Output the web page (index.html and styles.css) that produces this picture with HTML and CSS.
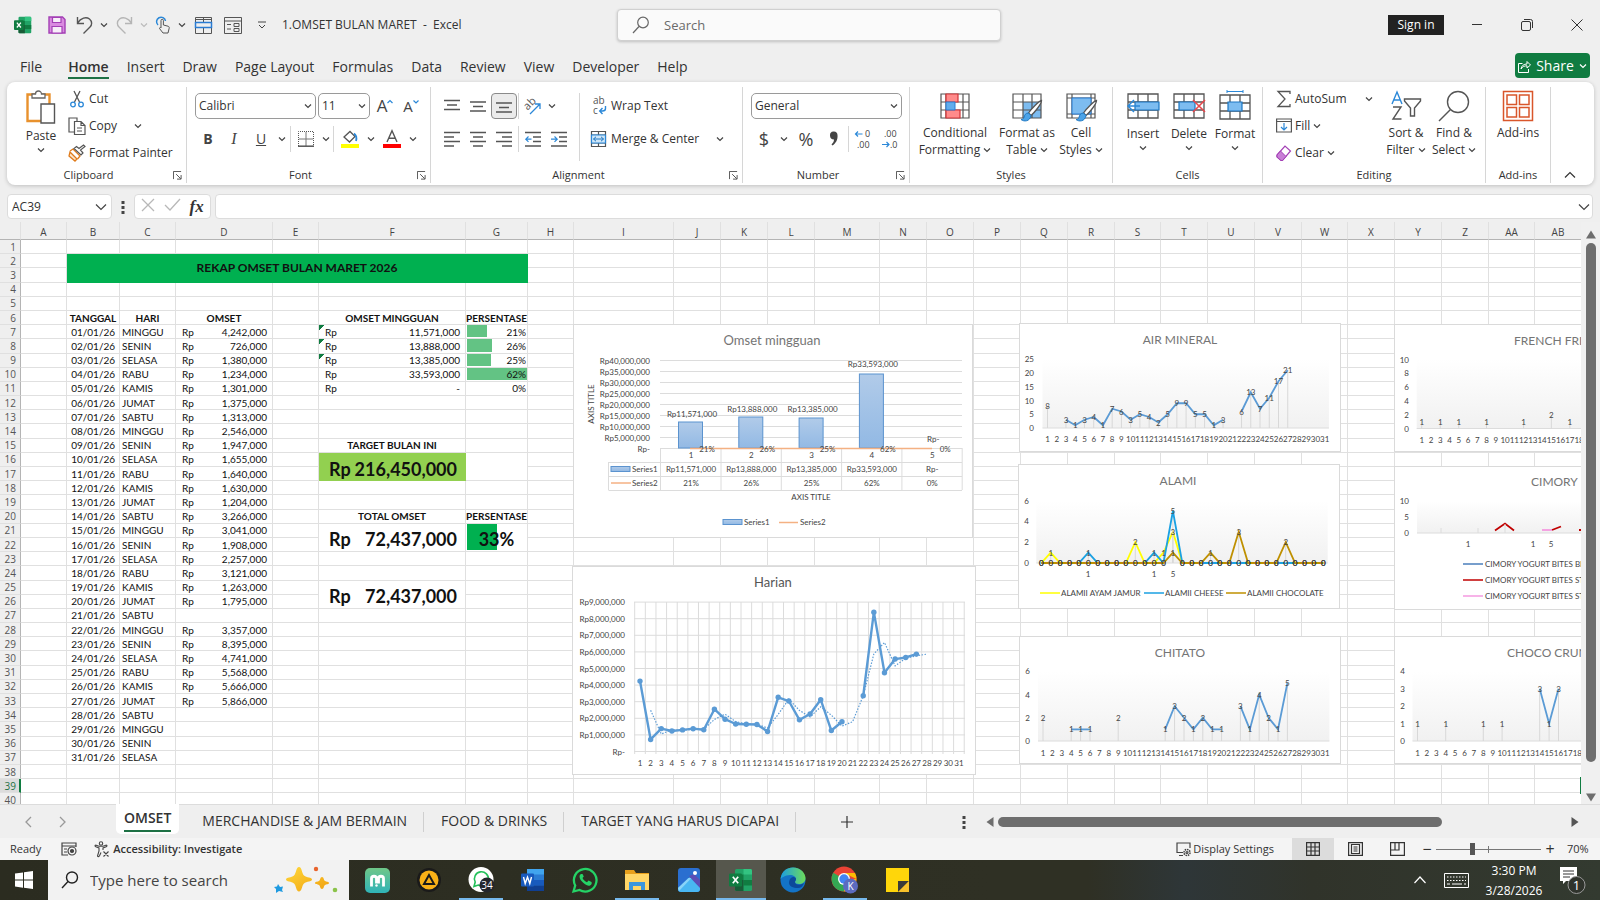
FILE: index.html
```html
<!DOCTYPE html>
<html lang="en">
<head>
<meta charset="utf-8">
<title>1.OMSET BULAN MARET - Excel</title>
<link rel="stylesheet" href="styles.css">
</head>
<body>
<svg class="defs" aria-hidden="true">
  <symbol id="chev" viewBox="0 0 8 8"><path d="M1 2.5 4 5.5 7 2.5" fill="none" stroke="currentColor" stroke-width="1.2"/></symbol>
  <symbol id="launch" viewBox="0 0 10 10"><path d="M.5 9V.5H9M3.5 3.5l5 5M9 4.5V9H4.5" fill="none" stroke="#444"/></symbol>
  <symbol id="grid" viewBox="0 0 32 26"><path d="M1 1h30v24H1zM1 9h30M1 17h30M11 1v24M21 1v24" fill="#fff" stroke="#555" stroke-width="1.3"/></symbol>
  <symbol id="brush" viewBox="0 0 24 24"><path d="M22.500 1.500C20 2 12 10 9.500 14l2.500 2.500C16 13 22.500 5 22.500 1.500z" fill="#fff" stroke="#555" stroke-width="1.3"/><path d="M9.500 14c-3 0-4 2-4.500 4.500-.4 1.500-2 2-3 2 3 2.500 9 2 10-4z" fill="#4ba3e8" stroke="#1c77c3"/></symbol>
  <symbol id="xl" viewBox="0 0 24 24"><rect x="6" y="1" width="17" height="22" rx="1.500" fill="#21a366"/><path d="M14.500 1H21.500a1.500 1.500 0 0 1 1.500 1.500V6.500h-8.500z" fill="#33c481"/><path d="M6 6.500h8.500V12H6z" fill="#107c41"/><path d="M14.500 12H23v5.500h-8.500z" fill="#107c41"/><path d="M6 12h8.500v11H7.500A1.500 1.500 0 0 1 6 21.500z" fill="#185c37"/><rect x="0" y="5.500" width="13" height="13" rx="1.200" fill="#107c41"/><path d="m3.800 8.800 5.400 6.500m0-6.500-5.400 6.500" stroke="#fff" stroke-width="1.700"/></symbol>
</svg>

<header class="titlebar">
  <div class="qat">
    <svg class="q w24" viewBox="0 0 24 24"><use href="#xl" x="-4" y="3" width="18" height="18"/></svg>
    <button class="q w30" aria-label="Save"><svg width="18" height="18" viewBox="0 0 18 18"><path d="M1 1h13.500L17 3.500V17H1z" fill="#d98be0" stroke="#a33fb5" stroke-width="1.400"/><path d="M4.500 1.500h8.500v5H4.500zM4 10.500h10V17H4z" fill="#f7eef9" stroke="#a33fb5" stroke-width="1.200"/></svg></button>
    <button class="q w26" aria-label="Undo"><svg width="18" height="18" viewBox="0 0 18 18" fill="none" stroke="#555" stroke-width="1.400"><path d="M1.500 1v6.500H8M1.500 7C5 2 10 .5 13.500 3c3 2.500 2.500 6 .5 8L7.500 17.500"/></svg></button>
    <button class="q w12" aria-label="Undo list"><svg class="chev"><use href="#chev"/></svg></button>
    <button class="q w28 dim" aria-label="Redo"><svg width="18" height="18" viewBox="0 0 18 18" fill="none" stroke="#b5b5b5" stroke-width="1.400"><path d="M16.500 1v6.500H10M16.500 7C13 2 8 .5 4.500 3c-3 2.500-2.500 6-.5 8l6.500 6.500"/></svg></button>
    <button class="q w12 dim" aria-label="Redo list"><svg class="chev"><use href="#chev"/></svg></button>
    <button class="q w26" aria-label="Touch mode"><svg width="16" height="18" viewBox="0 0 16 18" fill="none"><path d="M3 9A4.500 4.500 0 1 1 10.500 5" stroke="#2b88d8" stroke-width="1.500"/><path d="M6 12V4.500a1.200 1.200 0 0 1 2.400 0V9l4.600 1.200c1 .3 1.400 1 1.200 2L13 17H8L4.500 12.500c0-1.200 1-1.200 1.500-.5z" fill="#f0f0f0" stroke="#555"/></svg></button>
    <button class="q w12" aria-label="Touch list"><svg class="chev"><use href="#chev"/></svg></button>
    <button class="q w30" aria-label="Freeze panes"><svg width="17" height="17" viewBox="0 0 17 17" fill="none" stroke="#555"><path d="M.5.500h16v16H.5zM8.500.5v5M8.500 11v6M.5 2.500h16"/><path d="M.5 5.500h16v5H.5z" stroke="#2b7cd3" stroke-width="1.500"/></svg></button>
    <button class="q w30" aria-label="Form"><svg width="18" height="17" viewBox="0 0 18 17" fill="none" stroke="#555"><path d="M.5.500h17v16H.5zM.5 4h17M3 7.500h4M3 12h4M10 6.500h5v3h-5zM10 11.500h5v3h-5z"/></svg></button>
    <button class="q w28" aria-label="Customize toolbar"><svg width="8" height="9" viewBox="0 0 8 9" fill="none" stroke="#444"><path d="M0 1h8M1 4l3 3 3-3"/></svg></button>
    <span class="doc">1.OMSET BULAN MARET&nbsp; -&nbsp; Excel</span>
  </div>
  <label class="search"><svg width="18" height="18" viewBox="0 0 18 18" fill="none" stroke="#666" stroke-width="1.200"><circle cx="11" cy="6.500" r="5.300"/><path d="M7 10.500 1 17"/></svg><input type="text" placeholder="Search" aria-label="Search"></label>
  <div class="win">
    <button class="signin">Sign in</button>
    <button class="wb" aria-label="Minimize"><svg width="12" height="12" viewBox="0 0 12 12"><path d="M1 5.500h10" stroke="#333"/></svg></button>
    <button class="wb" aria-label="Restore"><svg width="12" height="12" viewBox="0 0 12 12" fill="none" stroke="#333"><rect x=".5" y="2.500" width="9" height="9" rx="1.500"/><path d="M3 .5h6.500a2 2 0 0 1 2 2V9"/></svg></button>
    <button class="wb" aria-label="Close"><svg width="12" height="12" viewBox="0 0 12 12"><path d="m.5.500 11 11m0-11-11 11" stroke="#333"/></svg></button>
  </div>
</header>

<nav class="tabs">
  <a href="#file">File</a><a href="#home" class="on">Home</a><a href="#insert">Insert</a><a href="#draw">Draw</a><a href="#layout">Page Layout</a><a href="#formulas">Formulas</a><a href="#data">Data</a><a href="#review">Review</a><a href="#view">View</a><a href="#developer">Developer</a><a href="#help">Help</a>
  <button class="share"><svg width="13" height="14" viewBox="0 0 13 14" fill="none" stroke="#fff"><path d="M4.500 4.500h-4v9h10V10M3 10c.5-3.500 3-5 6-5V2.500L12.500 6 9 9V6.800C6.500 6.800 4.500 7.500 3 10z"/></svg>Share<svg class="chev"><use href="#chev"/></svg></button>
</nav>

<section class="ribbon">
  <div class="group clip">
    <div class="body">
      <button class="big"><svg width="30" height="34" viewBox="0 0 30 34"><path d="M1.500 4.500h22V31h-22z" fill="#fff" stroke="#e8912d" stroke-width="2.400"/><path d="M6 8V4h3.500a3 3 0 0 1 6 0H19v4z" fill="#fff" stroke="#666" stroke-width="1.300"/><path d="M15 14h13.500v19H15z" fill="#fff" stroke="#555" stroke-width="1.400"/></svg><span>Paste</span><svg class="chev"><use href="#chev"/></svg></button>
      <div class="stack">
        <button class="row"><svg width="18" height="18" viewBox="0 0 18 18" fill="none"><path d="M6 1l5.500 11M12 1 6.500 12" stroke="#555" stroke-width="1.300"/><circle cx="5" cy="14.500" r="2.300" stroke="#2b88d8" stroke-width="1.300"/><circle cx="13" cy="14.500" r="2.300" stroke="#2b88d8" stroke-width="1.300"/></svg>Cut</button>
        <button class="row"><svg width="18" height="18" viewBox="0 0 18 18" fill="#fff" stroke="#555" stroke-width="1.200"><path d="M6 15H1V1h8v3"/><path d="M6.500 4.500H13l4 4v9H6.500zM13 4.500v4h4M9 11h5M9 14h5"/></svg>Copy<svg class="chev far"><use href="#chev"/></svg></button>
        <button class="row"><svg width="18" height="18" viewBox="0 0 18 18" fill="none"><path d="m2 8 7 7-2 2L1 12z" fill="#fbe3c8" stroke="#e07b1a" stroke-width="1.300"/><path d="m2 7 3-2 7 7-2.500 3" stroke="#e07b1a" stroke-width="1.300"/><path d="M6 4.500 13 11l2-2-2.500-3L17 2.500 15.500 1 11 4.500 8.500 2.500z" fill="#fff" stroke="#555" stroke-width="1.200"/></svg>Format Painter</button>
      </div>
    </div>
    <div class="label">Clipboard<svg class="launch"><use href="#launch"/></svg></div>
  </div>

  <div class="group font">
    <div class="body lines">
      <div class="line">
        <select class="w121" aria-label="Font"><option>Calibri</option></select>
        <select class="w52" aria-label="Font size"><option>11</option></select>
        <button class="i w26" aria-label="Grow font"><span class="glyph">A</span><svg width="6" height="14" viewBox="0 0 6 14"><path d="M.5 4 3 1.500 5.500 4" fill="none" stroke="#2b88d8" stroke-width="1.200"/></svg></button>
        <button class="i w26" aria-label="Shrink font"><span class="glyph sm">A</span><svg width="6" height="14" viewBox="0 0 6 14"><path d="M.5 1.500 3 4l2.500-2.500" fill="none" stroke="#2b88d8" stroke-width="1.200"/></svg></button>
      </div>
      <div class="line">
        <button class="i w26"><b>B</b></button><button class="i w26"><i>I</i></button><button class="i w28"><u>U</u></button><button class="i w14" aria-label="Underline list"><svg class="chev"><use href="#chev"/></svg></button>
        <span class="sep"></span>
        <button class="i w28" aria-label="Borders"><svg width="16" height="16" viewBox="0 0 16 16" fill="none" stroke="#555"><path d="M.5 15V.5h15V15" stroke-dasharray="1 1"/><path d="M8 1v14M1 8h14" stroke="#777"/><path d="M0 15.200h16" stroke-width="1.500"/></svg></button><button class="i w12" aria-label="Border list"><svg class="chev"><use href="#chev"/></svg></button>
        <span class="sep"></span>
        <button class="i w30" aria-label="Fill color"><svg width="18" height="18" viewBox="0 0 18 18"><path d="m3 7 6-5.500 5 5L8.500 12z" fill="#fff" stroke="#555" stroke-width="1.300"/><path d="M13 3.500c2 1.500 3 4 2 7.500" fill="none" stroke="#2b88d8" stroke-width="1.800"/><path d="M0 14h18v4H0z" fill="#ff0"/></svg></button><button class="i w12" aria-label="Fill list"><svg class="chev"><use href="#chev"/></svg></button>
        <button class="i w30" aria-label="Font color"><svg width="18" height="18" viewBox="0 0 18 18"><path d="M4 12 9 .8 14 12M6 8.200h6" fill="none" stroke="#555" stroke-width="1.400"/><path d="M0 14h18v4H0z" fill="#f00"/></svg></button><button class="i w12" aria-label="Font color list"><svg class="chev"><use href="#chev"/></svg></button>
      </div>
    </div>
    <div class="label">Font<svg class="launch"><use href="#launch"/></svg></div>
  </div>

  <div class="group align">
    <div class="body">
      <div class="lines">
        <div class="line">
          <button class="i w26" aria-label="Top align"><svg width="16" height="14" viewBox="0 0 16 14"><path d="M0 1.500h16M3 6h10M0 10.500h16" stroke="#555" stroke-width="1.300"/></svg></button>
          <button class="i w26" aria-label="Middle align"><svg width="16" height="14" viewBox="0 0 16 14"><path d="M0 3h16M3 7.500h10M0 12h16" stroke="#555" stroke-width="1.300"/></svg></button>
          <button class="i w26 sel" aria-label="Bottom align"><svg width="16" height="14" viewBox="0 0 16 14"><path d="M0 4h16M3 8.500h10M0 13h16" stroke="#555" stroke-width="1.300"/></svg></button>
          <span class="sep"></span>
          <button class="i w26" aria-label="Orientation"><svg width="18" height="18" viewBox="0 0 18 18"><text x="6" y="10" font-size="11" text-anchor="middle" fill="#555" transform="rotate(-45 6 7)">ab</text><path d="m6 17 9.500-9.500M11 7h5v5" fill="none" stroke="#2b88d8" stroke-width="1.300"/></svg></button><button class="i w12" aria-label="Orientation list"><svg class="chev"><use href="#chev"/></svg></button>
        </div>
        <div class="line">
          <button class="i w26" aria-label="Align left"><svg width="16" height="16" viewBox="0 0 16 16"><path d="M0 1.500h16M0 6h10M0 10.500h16M0 15h10" stroke="#555" stroke-width="1.300"/></svg></button>
          <button class="i w26" aria-label="Center"><svg width="16" height="16" viewBox="0 0 16 16"><path d="M0 1.500h16M3 6h10M0 10.500h16M3 15h10" stroke="#555" stroke-width="1.300"/></svg></button>
          <button class="i w26" aria-label="Align right"><svg width="16" height="16" viewBox="0 0 16 16"><path d="M0 1.500h16M6 6h10M0 10.500h16M6 15h10" stroke="#555" stroke-width="1.300"/></svg></button>
          <span class="sep"></span>
          <button class="i w26" aria-label="Decrease indent"><svg width="16" height="16" viewBox="0 0 16 16" fill="none"><path d="M0 1.500h16M8 6h8M8 10.500h8M0 15h16" stroke="#555" stroke-width="1.300"/><path d="M6.500 8.200H1M3.500 5.500.8 8.200l2.700 2.700" stroke="#2b88d8" stroke-width="1.200"/></svg></button>
          <button class="i w26" aria-label="Increase indent"><svg width="16" height="16" viewBox="0 0 16 16" fill="none"><path d="M0 1.500h16M8 6h8M8 10.500h8M0 15h16" stroke="#555" stroke-width="1.300"/><path d="M0 8.200h5.500M3.500 5.500l2.700 2.700-2.700 2.700" stroke="#2b88d8" stroke-width="1.200"/></svg></button>
        </div>
      </div>
      <span class="sep tall"></span>
      <div class="lines">
        <div class="line"><button class="row"><svg width="18" height="18" viewBox="0 0 18 18" fill="none"><text x="3" y="7" font-size="10" fill="#555">ab</text><text x="3" y="17" font-size="10" fill="#555">c</text><path d="M15.500 9v2.500c0 2-1.500 2.500-3 2.500H10M12.500 11 9.700 14l2.800 3" stroke="#2b88d8" stroke-width="1.400"/></svg>Wrap Text</button></div>
        <div class="line"><button class="row"><svg width="18" height="18" viewBox="0 0 18 18" fill="none"><path d="M1.500 1.500h14v15h-14zM1.500 5h14M1.500 13h14M8.500 1.500V5M8.500 13v3.500" stroke="#555" stroke-width="1.200"/><path d="M1.500 5h14v8h-14z" fill="#cfe6f8" stroke="#2b88d8" stroke-width="1.200"/><path d="M3.500 9h10M6 6.800 3.500 9 6 11.200M11 6.800 13.500 9 11 11.200" stroke="#1c77c3"/></svg>Merge &amp; Center<svg class="chev far"><use href="#chev"/></svg></button></div>
      </div>
    </div>
    <div class="label">Alignment<svg class="launch"><use href="#launch"/></svg></div>
  </div>

  <div class="group num">
    <div class="body lines">
      <div class="line"><select class="w151" aria-label="Number format"><option>General</option></select></div>
      <div class="line">
        <button class="i w26 money">$</button><button class="i w14" aria-label="Currency list"><svg class="chev"><use href="#chev"/></svg></button><button class="i w30 money">%</button><button class="i w26" aria-label="Comma style"><svg width="10" height="16" viewBox="0 0 10 16"><path d="M1 4.500a3.700 3.700 0 0 1 7.500-.5c.5 5-2 8.500-5 10.500l-1-1c1.500-1.500 2.500-3 2.500-5C2.500 8.500 1 7 1 4.500z" fill="#444"/></svg></button>
        <span class="sep"></span>
        <button class="i w26" aria-label="Increase decimal"><svg width="18" height="20" viewBox="0 0 18 20"><text x="11" y="8" font-size="9" fill="#444">0</text><text x="3" y="19" font-size="9" fill="#444">.00</text><path d="M8.500 5H1.500M4 2.500 1.500 5 4 7.500" fill="none" stroke="#2b88d8" stroke-width="1.200"/></svg></button>
        <button class="i w28" aria-label="Decrease decimal"><svg width="18" height="20" viewBox="0 0 18 20"><text x="3" y="8" font-size="9" fill="#444">.00</text><text x="9" y="19" font-size="9" fill="#444">.0</text><path d="M1 15.500h7M5.500 13 8 15.500 5.500 18" fill="none" stroke="#2b88d8" stroke-width="1.200"/></svg></button>
      </div>
    </div>
    <div class="label">Number<svg class="launch"><use href="#launch"/></svg></div>
  </div>

  <div class="group styles">
    <div class="body">
      <button class="big w86"><svg width="32" height="32" viewBox="0 0 32 32"><path d="M2 4h28v24H2zM2 12h28M2 20h28M7 4v24M24 4v24" fill="#fff" stroke="#555" stroke-width="1.200"/><path d="M7 4h12v8H7zM7 20h14v8H7z" fill="#ff8b8b" stroke="#d13438" stroke-width="1.200"/><path d="M7 12h9v8H7z" fill="#62acec" stroke="#2b7cd3"/></svg><span>Conditional<br>Formatting <svg class="chev"><use href="#chev"/></svg></span></button>
      <button class="big w58"><svg width="32" height="32" viewBox="0 0 32 32"><path d="M2 4h28v24H2z" fill="#fff"/><path d="M12 12h18v16H12z" fill="#7dbcf0"/><path d="M2 4h28v24H2zM2 12h28M2 20h28M12 4v24M21 4v24" fill="none" stroke="#555" stroke-width="1.200"/><use href="#brush" x="8" y="9" width="24" height="24"/></svg><span>Format as<br>Table <svg class="chev"><use href="#chev"/></svg></span></button>
      <button class="big w50"><svg width="32" height="32" viewBox="0 0 32 32"><path d="M2 4h28v24H2zM2 8h28M2 24h28M7 4v24M26 4v24" fill="#fff" stroke="#555" stroke-width="1.200"/><path d="M7 8h19v16H7z" fill="#7dbcf0" stroke="#2b7cd3"/><use href="#brush" x="9" y="9" width="24" height="24"/></svg><span>Cell<br>Styles <svg class="chev"><use href="#chev"/></svg></span></button>
    </div>
    <div class="label">Styles</div>
  </div>

  <div class="group cells">
    <div class="body">
      <button class="big w46"><svg width="32" height="32" viewBox="0 0 32 32"><use href="#grid" y="3" width="32" height="26"/><path d="M8 12h24v8H8z" fill="#7dbcf0" stroke="#1c77c3" stroke-width="1.200"/><path d="M13 16H1.500M7 10l-6 6 6 6" fill="none" stroke="#2b88d8" stroke-width="1.500"/></svg><span>Insert</span><svg class="chev"><use href="#chev"/></svg></button>
      <button class="big w46"><svg width="32" height="32" viewBox="0 0 32 32"><use href="#grid" y="3" width="32" height="26"/><path d="M6 12h16v8H6z" fill="#7dbcf0" stroke="#1c77c3" stroke-width="1.200"/><path d="m20 10 12 12m0-12L20 22" stroke="#e8484d" stroke-width="1.600"/></svg><span>Delete</span><svg class="chev"><use href="#chev"/></svg></button>
      <button class="big w46"><svg width="32" height="32" viewBox="0 0 32 32"><use href="#grid" y="4" width="32" height="26"/><path d="M9 12h14v9H9z" fill="#7dbcf0" stroke="#1c77c3" stroke-width="1.200"/><path d="M8 1.500h16M8 0v3M24 0v3" stroke="#2b88d8"/></svg><span>Format</span><svg class="chev"><use href="#chev"/></svg></button>
    </div>
    <div class="label">Cells</div>
  </div>

  <div class="group edit">
    <div class="body">
      <div class="stack">
        <button class="row"><svg width="16" height="18" viewBox="0 0 16 18"><path d="M14 4V1.500H2L9 9l-7 7.500h12V14" fill="none" stroke="#555" stroke-width="1.300"/></svg>AutoSum<svg class="chev far"><use href="#chev"/></svg></button>
        <button class="row"><svg width="16" height="18" viewBox="0 0 16 18" fill="none"><path d="M.6 2h14.800v13H.6zM.6 4.500h14.800" stroke="#555" stroke-width="1.200"/><path d="M8 6v7M5 10l3 3 3-3" stroke="#2b88d8" stroke-width="1.200"/></svg>Fill<svg class="chev"><use href="#chev"/></svg></button>
        <button class="row"><svg width="16" height="18" viewBox="0 0 16 18"><path d="m1 11 8-9 5.500 5-8 9.500H5L1 13z" fill="#fff" stroke="#a33fb5" stroke-width="1.200"/><path d="m1 11 3.500-4 5.500 5.500-3.500 4H5L1 13z" fill="#c87fd6" stroke="#a33fb5"/></svg>Clear<svg class="chev"><use href="#chev"/></svg></button>
      </div>
      <button class="big w50"><svg width="32" height="32" viewBox="0 0 32 32" fill="none"><path d="m2 14 5-12 5 12M4 10h6" stroke="#2b88d8" stroke-width="1.400"/><path d="M3 17h8L3 29h8.500" stroke="#555" stroke-width="1.400"/><path d="M14.500 9h16v2L24.500 18v8h-4v-8l-6-7z" stroke="#555" stroke-width="1.400"/></svg><span>Sort &amp;<br>Filter <svg class="chev"><use href="#chev"/></svg></span></button>
      <button class="big w46"><svg width="32" height="32" viewBox="0 0 32 32" fill="none" stroke="#555" stroke-width="1.400"><circle cx="20" cy="12" r="10.500"/><path d="M12.500 19.500 1 31"/></svg><span>Find &amp;<br>Select <svg class="chev"><use href="#chev"/></svg></span></button>
    </div>
    <div class="label">Editing</div>
  </div>

  <div class="group addins">
    <div class="body"><button class="big w50"><svg width="32" height="32" viewBox="0 0 32 32" fill="none" stroke="#d9562b" stroke-width="1.500"><path d="M1.500 1.500h29v29h-29z"/><path d="M5 5h9.500v9.500H5zM17.500 5H27v9.500h-9.500zM5 17.500h9.500V27H5zM17.500 17.500H27V27h-9.500z"/></svg><span>Add-ins</span></button></div>
    <div class="label">Add-ins</div>
  </div>
  <button class="collapse" aria-label="Collapse ribbon"><svg width="12" height="8" viewBox="0 0 12 8"><path d="m1 6.500 5-5 5 5" fill="none" stroke="#333" stroke-width="1.200"/></svg></button>
</section>

<section class="fbar">
  <label class="box name"><input type="text" value="AC39" aria-label="Name box"><svg width="12" height="8" viewBox="0 0 12 8"><path d="m1 1.500 5 5 5-5" fill="none" stroke="#444" stroke-width="1.200"/></svg></label>
  <svg class="dots" width="4" height="14" viewBox="0 0 4 14" fill="#444"><path d="M.5 1h3v3h-3zM.5 6h3v3h-3zM.5 11h3v3h-3z"/></svg>
  <div class="box fx">
    <button aria-label="Cancel"><svg width="14" height="14" viewBox="0 0 14 14"><path d="m1 1 12 12m0-12L1 13" stroke="#b8b8b8" stroke-width="1.300"/></svg></button>
    <button aria-label="Enter"><svg width="17" height="13" viewBox="0 0 17 13"><path d="m1 7 5 5L16 1" fill="none" stroke="#b8b8b8" stroke-width="1.300"/></svg></button>
    <button class="fn">fx</button>
  </div>
  <label class="box formula"><input type="text" aria-label="Formula bar"><svg width="12" height="8" viewBox="0 0 12 8"><path d="m1 1.500 5 5 5-5" fill="none" stroke="#444" stroke-width="1.200"/></svg></label>
</section>

<main class="sheet">
  <div class="pane">
    <table id="cells"></table>
    <div id="charts"></div>
    <i class="cursor"></i>
  </div>
  <div class="vscroll"><svg width="12" height="9" viewBox="0 0 12 9"><path d="M1 8.500 6 .5l5 8z" fill="#6e6e6e"/></svg><span class="thumb"></span><svg width="12" height="9" viewBox="0 0 12 9"><path d="m1 .5 5 8 5-8z" fill="#6e6e6e"/></svg></div>
</main>

<nav class="sheets">
  <div class="arrows"><svg width="7" height="12" viewBox="0 0 7 12"><path d="M6 1 1 6l5 5" fill="none" stroke="#999" stroke-width="1.300"/></svg><svg width="7" height="12" viewBox="0 0 7 12"><path d="m1 1 5 5-5 5" fill="none" stroke="#999" stroke-width="1.300"/></svg></div>
  <a href="#omset" class="on"><span>OMSET</span></a><a href="#merch">MERCHANDISE &amp; JAM BERMAIN</a><a href="#food">FOOD &amp; DRINKS</a><a href="#target">TARGET YANG HARUS DICAPAI</a>
  <button class="add" aria-label="New sheet"><svg width="12" height="12" viewBox="0 0 12 12"><path d="M6 0v12M0 6h12" stroke="#333" stroke-width="1.200"/></svg></button>
  <svg class="more" width="4" height="14" viewBox="0 0 4 14" fill="#444"><path d="M.5 1h3v3h-3zM.5 6h3v3h-3zM.5 11h3v3h-3z"/></svg>
  <div class="hscroll"><svg width="8" height="10" viewBox="0 0 8 10"><path d="M7.500 0v10L.5 5z" fill="#6e6e6e"/></svg><div class="track"><span class="thumb"></span></div><svg width="8" height="10" viewBox="0 0 8 10"><path d="M.5 0v10l7-5z" fill="#555"/></svg></div>
</nav>

<footer class="status">
  <span class="ready">Ready</span>
  <svg class="rec" width="16" height="14" viewBox="0 0 16 14" fill="none" stroke="#444" stroke-width="1.200"><path d="M15 5V1H1v12h6M1 4h14M3 7h3M3 10h3"/><circle cx="11" cy="9" r="4"/><circle cx="11" cy="9" r="1.500" fill="#444"/></svg>
  <svg class="acc" width="16" height="16" viewBox="0 0 16 16" fill="none" stroke="#444" stroke-width="1.100"><circle cx="7" cy="2.500" r="1.700"/><path d="M1.500 4c-.8.500-.5 1.500.3 1.800L5 7v3l-1.500 5c.5 1 1.500.8 2-.2L7 11.500M12.500 4c.8.500.5 1.500-.3 1.800L9 7v2M1.500 4 5 5.200h4L12.500 4M9.500 10.500l5 5m0-5-5 5"/></svg>
  <span class="inv">Accessibility: Investigate</span>
  <span class="right">
    <button class="disp"><svg width="16" height="15" viewBox="0 0 16 15" fill="none" stroke="#444" stroke-width="1.200"><path d="M7 10.500H1V1h13v5M3 13.500h4"/><circle cx="11" cy="10.500" r="3" stroke-dasharray="1.500 .8" stroke-width="1.600"/><circle cx="11" cy="10.500" r="1"/></svg>Display Settings</button>
    <button class="v on" aria-label="Normal"><svg width="14" height="14" viewBox="0 0 14 14"><path d="M.6.600h12.800v12.800H.6zM.6 5h12.800M.6 9h12.800M5 .6v12.800M9 .6v12.800" fill="none" stroke="#333" stroke-width="1.200"/></svg></button>
    <button class="v" aria-label="Page layout"><svg width="15" height="14" viewBox="0 0 15 14"><path d="M.6.600h13.800v12.800H.6zM3.500 2.500h8v9h-8zM5.500 5h4M5.500 7h4M5.500 9h4" fill="none" stroke="#333" stroke-width="1.200"/></svg></button>
    <button class="v" aria-label="Page break"><svg width="15" height="14" viewBox="0 0 15 14"><path d="M.6.600h13.800v12.800H.6zM.6 8h8.400V.6M5 .6V8" fill="none" stroke="#333" stroke-width="1.200"/></svg></button>
    <span class="pm">−</span><input type="range" min="10" max="180" value="68" aria-label="Zoom"><span class="pm">+</span><span class="pct">70%</span>
  </span>
</footer>

<div class="taskbar">
  <button class="start" aria-label="Start"><svg width="18" height="18" viewBox="0 0 18 18" fill="#fff"><path d="m0 2.500 8-1.100v7.200H0zM9 1.300 18 0v8.600H9zM0 9.500h8v7.200l-8-1.100zM9 9.500h9V18l-9-1.300z"/></svg></button>
  <label class="tsearch"><svg width="18" height="18" viewBox="0 0 18 18" fill="none" stroke="#222" stroke-width="1.400"><circle cx="11" cy="6.500" r="5.500"/><path d="M7 10.500 1 17"/></svg><input type="text" placeholder="Type here to search" aria-label="Taskbar search"><svg width="66" height="28" viewBox="0 0 66 28"><defs><linearGradient id="gold" x2="1" y2="1"><stop stop-color="#ffd83a"/><stop offset="1" stop-color="#f0a010"/></linearGradient></defs><path d="M26 1c3 0 2.500 6 5 8.500s8 1.500 8 4-5.500 1.500-8 4-2 8-5 8-2.500-5.500-5-8-8-1.500-8-4 5.500-1.500 8-4S23 1 26 1zM49 11c2 0 1.500 3 3 4s4 .5 4 2-2.500 1-4 2-1 4-3 4-1.500-3-3-4-4-.5-4-2 2.500-1 4-2 1-4 3-4z" fill="url(#gold)"/><path d="m5 18 2 3 3-.5-1 3.500 1 2-4-1-3 2V23l-2-2 3-.5z" fill="#1f9ae0"/><circle cx="43" cy="3" r="2.200" fill="#e8642d"/><circle cx="62" cy="24" r="2.300" fill="#8bc34a"/></svg></label>
  <div class="apps">
    <button aria-label="Mobile app"><svg width="25" height="25" viewBox="0 0 25 25"><defs><linearGradient id="mg" x2="0" y2="1"><stop stop-color="#6fc788"/><stop offset="1" stop-color="#2fb4b8"/></linearGradient></defs><rect width="25" height="25" rx="5" fill="url(#mg)"/><path d="M6.500 18.500v-8c0-3 5-3 5 0v5M13.500 15.500v-5c0-3 5-3 5 0v8" fill="none" stroke="#fff" stroke-width="2.800"/><circle cx="11.500" cy="17.500" r="1.200" fill="#fff"/></svg></button>
    <button aria-label="Player"><svg width="24" height="24" viewBox="0 0 24 24"><circle cx="12" cy="12" r="12" fill="#1a1a1a"/><circle cx="12" cy="12" r="9.500" fill="#f9b017"/><path d="M12 7 7 16h10z" fill="none" stroke="#1a1a1a" stroke-width="2"/></svg></button>
    <button class="run" aria-label="WhatsApp Business"><svg width="28" height="26" viewBox="0 0 28 26"><circle cx="14" cy="12.500" r="12.500" fill="#fff"/><path d="M7 19.500 8.200 15a7 7 0 1 1 3 3z" fill="none" stroke="#25c15b" stroke-width="1.600"/><circle cx="20" cy="18" r="7.500" fill="#23262c"/><text x="20" y="22" font-size="10" text-anchor="middle" fill="#fff">34</text></svg></button>
    <button aria-label="Word"><svg width="24" height="24" viewBox="0 0 24 24"><path d="M6 1h17v22H6z" fill="#2b7cd3"/><path d="M6 1h17v5.500H6z" fill="#41a5ee"/><path d="M6 12h17v5.500H6z" fill="#185abd"/><path d="M6 17.500h17V23H6z" fill="#103f91"/><rect y="5.500" width="13" height="13" rx="1" fill="#185abd"/><path d="m2.500 9 1.700 6.500L6.500 9l2.300 6.500L10.500 9" fill="none" stroke="#fff" stroke-width="1.400"/></svg></button>
    <button aria-label="WhatsApp"><svg width="26" height="26" viewBox="0 0 26 26"><path d="m1.500 24.500 1.700-6A11.300 11.300 0 1 1 7.500 23z" fill="none" stroke="#25d366" stroke-width="2.300"/><path d="M9 7c-2 1-2 4 .5 7s6 5.500 8.500 4.500 1.500-3.500 1.500-3.500l-3-1.500-1.500 1.700c-2-.8-3.500-2.200-4.500-4.200L11.800 9.500 10.500 7z" fill="#25d366"/></svg></button>
    <button class="run" aria-label="File Explorer"><svg width="24" height="22" viewBox="0 0 24 22"><path d="M0 1h9l2 3h13v5H0z" fill="#e8a01c"/><path d="M0 5h24v16H0z" fill="#ffd667"/><path d="M4 21v-8h16v8h-4v-4H8v4z" fill="#3a96dd"/></svg></button>
    <button aria-label="Photos"><svg width="22" height="24" viewBox="0 0 22 24"><rect width="22" height="24" rx="3" fill="#2a6fd0"/><path d="m11 8 5-2 6 6v9z" fill="#5b4db5"/><path d="M0 20 10 10.500c1-.9 2-.9 3 0L22 20v1a3 3 0 0 1-3 3H3a3 3 0 0 1-3-3z" fill="#49b7f2"/><path d="M0 20 10 10.500c1-.9 2-.9 3 0L1 23z" fill="#8ad4f8"/><circle cx="17" cy="5" r="2" fill="#fff"/></svg></button>
    <button class="run now" aria-label="Excel"><svg width="24" height="24"><use href="#xl"/></svg></button>
    <button aria-label="Edge"><svg width="26" height="26" viewBox="0 0 26 26"><defs><linearGradient id="eg" x2="1"><stop stop-color="#1b9de2"/><stop offset="1" stop-color="#6ddc5a"/></linearGradient></defs><circle cx="13" cy="13" r="12.500" fill="#1373c6"/><path d="M.5 12C1.500 4 7 .5 13 .5c8 0 12.500 6 12.500 10.500 0 4-3 6-6.500 6-2.500 0-4-1-4-2s1-1.500 1-3c0-2-2.500-4-6-4-5 0-8.500 3-9.500 4z" fill="url(#eg)"/><path d="M9 16c0-4 2.500-6 4.500-6 1.500 0 2.500 1 2.500 2 0 1.500-1 2-1 3 0 3 5 4 9 1-1 3-3 5-6 5-5 0-9-2-9-5z" fill="#0c4a9a"/></svg></button>
    <button class="run" aria-label="Chrome"><svg width="28" height="28" viewBox="0 0 28 28"><circle cx="13" cy="13" r="12.500" fill="#ea4335"/><path d="M13 13 2.200 6.800A12.500 12.500 0 0 0 13 25.500z" fill="#34a853"/><path d="M13 13h12.500A12.500 12.500 0 0 1 13 25.500zM13 7h11a12 12 0 0 1 1.500 6z" fill="#fbbc04"/><circle cx="13" cy="13" r="6" fill="#fff"/><circle cx="13" cy="13" r="4.700" fill="#4285f4"/><circle cx="19.500" cy="20" r="7.500" fill="#5c6bc0"/><text x="19.500" y="24" font-size="10" text-anchor="middle" fill="#fff">K</text></svg></button>
    <button aria-label="Sticky Notes"><svg width="23" height="24" viewBox="0 0 23 24"><path d="M0 0h23v13l-11 11H0z" fill="#ffd60a"/><path d="M12 24V13h11z" fill="#3b3a39"/><path d="M12 24 23 13v11z" fill="#f9c22b"/></svg></button>
  </div>
  <div class="tray">
    <svg width="12" height="8" viewBox="0 0 12 8"><path d="m.5 7 5.500-6 5.500 6" fill="none" stroke="#fff" stroke-width="1.200"/></svg>
    <svg width="25" height="15" viewBox="0 0 25 15" fill="none" stroke="#fff"><path d="M.5.500h24v14H.5z"/><path d="M3 4h19M3 7.500h19" stroke-dasharray="1.500 1.500"/><path d="M3 11h3M8 11h10M20 11h2"/></svg>
    <div class="clock"><div>3:30 PM</div><div>3/28/2026</div></div>
    <svg width="27" height="28" viewBox="0 0 27 28"><path d="M1 1h17v14H7l-3 3v-3H1z" fill="#fff"/><path d="M4 5h11M4 8h11M4 11h7" stroke="#333"/><circle cx="17.500" cy="19" r="8.500" fill="#2f332c" stroke="#999"/><text x="17.500" y="24" font-size="13" text-anchor="middle" fill="#fff">1</text></svg>
  </div>
</div>
<script src="app.js"></script>
</body>
</html>
```

FILE: styles.css
```css
* { box-sizing: border-box; }
body {
  margin: 0;
  height: 100vh;
  display: flex;
  flex-direction: column;
  background: #efefef;
  color: #333;
  font: 12px/16px "Open Sans", "Noto Sans", sans-serif;
  overflow: hidden;
}
button, input, select { font: inherit; color: inherit; border: 0; background: none; padding: 0; margin: 0; outline: 0; }
a { color: inherit; text-decoration: none; }
svg { flex: none; overflow: visible; }
.defs { position: absolute; width: 0; height: 0; }
.chev { width: 8px; height: 8px; color: #444; }
.w12 { width: 12px; } .w14 { width: 14px; } .w24 { width: 24px; } .w26 { width: 26px; } .w28 { width: 28px; } .w30 { width: 30px; }
.w46 { width: 46px; } .w50 { width: 50px; } .w52 { width: 52px; } .w58 { width: 58px; } .w86 { width: 86px; }
.w121 { width: 121px; } .w151 { width: 151px; }

/* title bar */
.titlebar { height: 50px; display: grid; grid-template-columns: 1fr 384px 1fr; align-items: center; padding: 0 0 0 18px; }
.qat { display: flex; align-items: center; }
.q { display: flex; align-items: center; justify-content: center; height: 24px; flex: none; }
.dim .chev { color: #bbb; }
.doc { margin-left: 6px; white-space: nowrap; }
.search { height: 32px; display: flex; align-items: center; gap: 14px; padding: 0 14px; background: #fafafa; border: 1px solid #d0d0d0; border-radius: 4px; box-shadow: 0 1px 3px rgba(0,0,0,.2); }
.search input { font-size: 13px; line-height: 18px; flex: 1; }
.search input::placeholder { color: #6a6a6a; opacity: 1; }
.win { display: flex; justify-content: flex-end; align-items: center; }
.signin { background: #222; color: #fff; height: 20px; width: 56px; margin-right: 8px; font-size: 12px; }
.wb { width: 50px; height: 24px; display: flex; align-items: center; justify-content: center; }
.wb:last-child { margin-right: -2px; }

/* ribbon tabs */
.tabs { height: 32px; display: flex; align-items: flex-start; gap: 18px; padding: 7px 10px 0 20px; font-size: 14px; line-height: 20px; white-space: nowrap; }
.tabs a:first-child { margin-right: 8px; }
.tabs .on { font-weight: 600; border-bottom: 2px solid #1e7145; }
.share { margin: -4px 0 0 auto; width: 75px; height: 25px; background: #107c41; color: #fff; border-radius: 4px; display: flex; align-items: center; justify-content: center; gap: 5px; }
.share .chev { color: #fff; }

/* ribbon */
.ribbon { height: 103px; margin: 0 6px 0 7px; background: #fff; border-radius: 8px; box-shadow: 0 1px 4px rgba(0,0,0,.2); display: flex; padding: 5px 0 2px; }
.group { border-right: 1px solid #d6d6d6; display: flex; flex-direction: column; flex: none; }
.group .body { display: flex; flex: 1; }
.label { font-size: 11px; line-height: 16px; text-align: center; position: relative; height: 16px; }
.launch { position: absolute; right: 4px; top: 4px; width: 9px; height: 9px; }
.clip { width: 180px; } .font { width: 244px; } .align { width: 312px; } .num { width: 167px; }
.styles { width: 203px; } .cells { width: 150px; } .edit { width: 223px; } .addins { width: 65px; }
.clip .label, .font .label, .align .label, .num .label { padding-right: 16px; }
.big { display: flex; flex-direction: column; align-items: center; flex: none; padding-top: 3px; line-height: 17px; white-space: nowrap; height: 76px; }
.big span { margin-top: 2px; }
.clip .big { width: 48px; margin: 0 3px 0 10px; }
.clip .big span, .cells .big span { line-height: 20px; }
.stack { display: flex; flex-direction: column; height: 80px; flex: none; justify-content: space-around; margin-top: -1px; }
.row { display: flex; align-items: center; gap: 3px; white-space: nowrap; height: 24px; }
.clip .far { margin-left: 14px; }
.lines { display: flex; flex-direction: column; flex: none; }
.group .body.lines { flex-direction: column; padding: 6px 0 0 8px; gap: 7px; }
.line { display: flex; align-items: center; height: 26px; }
.align .lines { gap: 7px; padding-top: 6px; }
.align .lines:first-child { padding-left: 8px; width: 147px; }
.align .lines:last-child { padding-left: 9px; }
.align .far { margin-left: 14px; }
select { height: 26px; border: 1px solid #9a9a9a; border-radius: 5px; padding-left: 3px; appearance: none; background: #fff no-repeat right 3px center / 8px 8px; margin-right: 2px; background-image: url("data:image/svg+xml,%3Csvg xmlns='http://www.w3.org/2000/svg' viewBox='0 0 8 8'%3E%3Cpath d='M1 2.5 4 5.5 7 2.5' fill='none' stroke='%23444' stroke-width='1.2'/%3E%3C/svg%3E"); }
.i { display: flex; align-items: center; justify-content: center; height: 26px; flex: none; font-size: 14px; color: #444; }
.i i { font-family: "Liberation Serif", serif; font-size: 16px; }
.glyph { font-size: 17px; } .glyph.sm { font-size: 15px; }
.money { font-size: 18px; }
.sel { background: #ebebeb; border: 1px solid #8a8a8a; border-radius: 4px; }
.sep { width: 1px; height: 26px; background: #d6d6d6; margin: 0 1px; flex: none; }
.sep.tall { height: 68px; margin-top: 6px; }
.styles .body { padding-left: 2px; }
.cells .body { padding-left: 7px; }
.edit .body { padding-left: 13px; }
.edit .stack { width: 105px; }
.edit .far { margin-left: 15px; }
.addins .body { padding-left: 7px; }
.collapse { align-self: flex-end; margin: 0 18px 4px auto; display: flex; }

/* formula bar */
.fbar { height: 37px; display: flex; align-items: center; padding: 8px 7px 2px; }
.box { height: 25px; background: #fff; border: 1px solid #dcdcdc; border-radius: 4px; display: flex; align-items: center; flex: none; }
.name { width: 105px; padding: 0 4px; }
.name input, .formula input { width: 0; flex: 1; }
.dots { margin: 0 9px; }
.fx { width: 77px; justify-content: space-around; padding: 0 2px; }
.fn { font: italic bold 17px/20px "Liberation Serif", serif; }
.formula { flex: 1; margin-left: 4px; padding: 0 2px; }

/* worksheet */
.sheet { flex: 1; min-height: 0; display: flex; }
.pane { flex: 1; position: relative; overflow: hidden; background: #fff; }
table { width: 100%; height: calc(100% + 4px); table-layout: fixed; border-collapse: separate; border-spacing: 0; font: 10px/12px Lato, Carlito, sans-serif; color: #111; }
td, th { padding: 0; border-right: 1px solid #e0e0e0; border-bottom: 1px solid #e0e0e0; white-space: nowrap; font-weight: 400; overflow: visible; }
thead th { height: 18px; background: #efefef; border-bottom-color: #b4b4b4; font: 10px/14px "Open Sans", sans-serif; color: #444; padding-top: 2px; }
tbody th { background: #efefef; font: 10px/12px "Open Sans", sans-serif; color: #555; text-align: right; padding-right: 4px; border-right-color: #b4b4b4; }
tbody th.cur { background: #dcdcdc; color: #1e7145; border-right: 2px solid #107c41; padding-right: 3px; }
.hd { text-align: center; font-weight: 700; }
.date { text-align: right; padding-right: 4px; }
.hari { padding-left: 2px; }
.acct { display: flex; justify-content: space-between; padding: 0 5px 0 6px; }
.head { background: #00b050; font-size: 12px; font-weight: 700; text-align: center; border-color: #00b050; }
.large { font-size: 18px; line-height: 20px; font-weight: 700; padding-top: 4px; }
.large .acct { padding: 0 8px 0 10px; }
.lime { background: #92d050; border-color: #92d050; }
.flag { background: linear-gradient(135deg, #107c41 4px, transparent 4px) no-repeat; }
.bar { position: relative; text-align: right; padding-right: 1px; }
.bar i { position: absolute; left: 1px; top: 0; bottom: 1px; background: #63c384; }
.bar span { position: relative; }
.bar.large { text-align: center; padding: 4px 0 0; }
.bar.large i { background: #00b050; }
.cursor { position: absolute; right: 0; top: 555px; width: 1px; height: 17px; background: #107c41; }
#charts { position: absolute; left: 0; top: 0; }
.chart { position: absolute; margin: 0; background: #fff; outline: 1px solid #dadada; outline-offset: -1px; overflow: hidden; }
.chart svg { display: block; font-family: Lato, Carlito, sans-serif; font-size: 8px; fill: #444; }
.chart .ttl { font-size: 12px; fill: #757575; }
.chart .gl { stroke: #dcdcdc; fill: none; }
.chart .drop { stroke: #d8d8d8; fill: none; }
.vscroll { width: 19px; background: #f0f0f0; display: flex; flex-direction: column; align-items: center; padding: 8px 0 2px 1px; }
.vscroll .thumb { width: 10px; flex: 1; margin: 4px 0 31px; border-radius: 5px; background: #6e6e6e; }

/* sheet tabs */
.sheets { height: 34px; display: flex; align-items: stretch; font-size: 14px; line-height: 32px; border-top: 1px solid #dcdcdc; color: #333; white-space: nowrap; }
.arrows { width: 116px; display: flex; gap: 27px; padding-left: 25px; align-items: center; }
.sheets a { padding: 0 17px; position: relative; }
.sheets a:not(.on)::after { content: ""; position: absolute; right: 0; top: 7px; height: 20px; width: 1px; background: #cfcfcf; }
.sheets .on { background: #fff; border-radius: 0 0 5px 5px; margin: -1px 6px 4px 0; padding: 0 8px; font-weight: 600; line-height: 24px; }
.sheets .on span { display: block; padding-top: 2px; border-bottom: 2px solid #1e7145; }
.add { width: 30px; margin-left: 36px; display: flex; align-items: center; justify-content: center; }
.more { margin: auto 18px auto auto; }
.hscroll { width: 616px; display: flex; align-items: center; gap: 4px; padding-left: 2px; padding-right: 21px; }
.track { flex: 1; }
.hscroll .thumb { display: block; width: 78%; height: 10px; border-radius: 5px; background: #6e6e6e; }

/* status bar */
.status { height: 22px; background: #f4f4f4; display: flex; align-items: center; font-size: 11px; padding-left: 10px; white-space: nowrap; }
.rec { margin-left: 20px; } .acc { margin: 0 3px 0 17px; }
.inv { font-weight: 600; }
.right { margin-left: auto; display: flex; align-items: center; height: 22px; }
.disp { display: flex; align-items: center; gap: 1px; margin-right: 18px; }
.v { width: 42px; height: 22px; display: flex; align-items: center; justify-content: center; }
.v.on { background: #dcdcdc; }
.pm { font-size: 16px; width: 18px; text-align: center; }
input[type=range] { appearance: none; width: 105px; height: 12px; background: linear-gradient(#777, #777) center / 100% 1px no-repeat, linear-gradient(#777, #777) center / 1px 7px no-repeat; }
input[type=range]::-webkit-slider-thumb { appearance: none; width: 5px; height: 12px; background: #555; }
.pct { width: 41px; padding-left: 8px; }

/* taskbar */
.taskbar { height: 40px; display: flex; background: linear-gradient(90deg, #2b2c20 0, #2f3024 62%, #2f3024 68%, #2e3638 74%, #30332a 82%, #333a30 100%); color: #fff; }
.start { width: 48px; display: flex; align-items: center; justify-content: center; }
.tsearch { width: 301px; background: #f2f2f2; display: flex; align-items: center; padding: 0 10px 0 13px; gap: 11px; }
.tsearch input { flex: 1; width: 0; font-size: 15px; color: #333; line-height: 20px; }
.tsearch input::placeholder { color: #444; opacity: 1; }
.apps { display: flex; margin-left: 2px; }
.apps button { width: 52px; display: flex; align-items: center; justify-content: center; padding: 0 2px; }
.apps .run { border-bottom: 2px solid #76b9ed; padding: 2px 0 0; width: 44px; margin: 0 4px; }
.apps .now { background: #56574d; width: 50px; margin: 0 1px; }
.tray { margin-left: auto; display: flex; align-items: center; gap: 18px; padding-right: 14px; }
.clock { font-size: 12px; line-height: 20px; text-align: center; width: 58px; margin: 0 -2px; padding-top: 1px; }
```

FILE: app.js
```js
const PANE_TOP = 222;

/* ---- worksheet cells ---- */
const cols = [['A',46],['B',53],['C',56],['D',97],['E',46],['F',147],['G',62],['H',46],['I',100],['J',47],['K',47],['L',47],['M',65],['N',47],['O',47],['P',47],
  ['Q',47],['R',47],['S',46],['T',47],['U',47],['V',47],['W',46],['X',47],['Y',47],['Z',47],['AA',46],['AB',47]];
const days = ['MINGGU','SENIN','SELASA','RABU','KAMIS','JUMAT','SABTU'];
const omset = [4242,726,1380,1234,1301,1375,1313,2546,1947,1655,1640,1630,1204,3266,3041,1908,2257,3121,1263,1795,null,3357,8395,4741,5568,5666,5866];
const acct = v => `<div class="acct"><span>Rp</span><span>${v}</span></div>`;
const cell = {};
const put = (ref, html, cls = '', span = '') => { cell[ref] = `<td class="${cls}" ${span}>${html}</td>`; };
const skip = (...refs) => refs.forEach(r => { cell[r] = ''; });

put('B2', 'REKAP OMSET BULAN MARET 2026', 'head', 'colspan="6" rowspan="2"');
skip('C2','D2','E2','F2','G2','B3','C3','D3','E3','F3','G3');
put('B6', 'TANGGAL', 'hd'); put('C6', 'HARI', 'hd'); put('D6', 'OMSET', 'hd');
put('F6', 'OMSET MINGGUAN', 'hd'); put('G6', 'PERSENTASE', 'hd');
for (let d = 1; d <= 31; d++) {
  put('B' + (d + 6), String(d).padStart(2, '0') + '/01/26', 'date');
  put('C' + (d + 6), days[(d - 1) % 7], 'hari');
  const v = omset[d - 1];
  if (v) put('D' + (d + 6), acct((v * 1000).toLocaleString('en-US')));
}
[['11,571,000', 21, 33], ['13,888,000', 26, 41], ['13,385,000', 25, 39], ['33,593,000', 62, 98], ['-', 0, 0]].forEach(([v, p, w], k) => {
  put('F' + (k + 7), acct(v), k < 3 ? 'flag' : '');
  put('G' + (k + 7), `<i style="width:${w}%"></i><span>${p}%</span>`, 'bar');
});
put('F15', 'TARGET BULAN INI', 'hd');
put('F16', acct('216,450,000'), 'large lime', 'rowspan="2"'); put('G16', '', '', 'rowspan="2"'); skip('F17', 'G17');
put('F20', 'TOTAL OMSET', 'hd'); put('G20', 'PERSENTASE', 'hd');
put('F21', acct('72,437,000'), 'large', 'rowspan="2"'); put('G21', '<i style="width:49%"></i><span>33%</span>', 'bar large', 'rowspan="2"'); skip('F22', 'G22');
put('F25', acct('72,437,000'), 'large', 'rowspan="2"'); skip('F26');

let t = '<colgroup><col style="width:21px">' + cols.map(c => `<col style="width:${c[1]}px">`).join('') + '</colgroup><thead><tr><th class="corner"></th>' +
  cols.map(c => `<th>${c[0]}</th>`).join('') + '</tr></thead><tbody>';
for (let r = 1; r <= 40; r++) {
  t += `<tr><th${r === 39 ? ' class="cur"' : ''}>${r}</th>` + cols.map(c => (c[0] + r) in cell ? cell[c[0] + r] : '<td></td>').join('') + '</tr>';
}
document.getElementById('cells').innerHTML = t + '</tbody>';

/* ---- charts ---- */
const text = (x, y, s, a = 'middle', extra = '') => `<text x="${x}" y="${y + 3}" text-anchor="${a}" ${extra}>${s}</text>`;
const title = (x, y, s, a = 'middle', extra = '') => `<text class="ttl" x="${x}" y="${y + 4}" text-anchor="${a}" ${extra}>${s}</text>`;
const line = (pts, color, w = 1.5, extra = '') => `<polyline points="${pts.map(p => p.join()).join(' ')}" fill="none" stroke="${color}" stroke-width="${w}" ${extra}/>`;
const seg = (x1, y1, x2, y2, cls = 'gl') => `<path class="${cls}" d="M${x1} ${y1}L${x2} ${y2}"/>`;
let out = '<svg class="defs"><linearGradient id="pl" x2="0" y2="1"><stop stop-color="#fff"/><stop offset="1" stop-color="#f1f1f1"/></linearGradient><linearGradient id="bl" x2="0" y2="1"><stop stop-color="#b1cbe9"/><stop offset="1" stop-color="#92b9e4"/></linearGradient></svg>';
const chart = (x, y, w, h, body) => {
  out += `<figure class="chart" style="left:${x}px;top:${y - PANE_TOP}px"><svg width="${w}" height="${h}" viewBox="${x} ${y} ${w} ${h}">${body}</svg></figure>`;
};

/* weekly revenue */
{
  let b = title(772, 341, 'Omset mingguan', 'middle', 'style="font-size:13px"');
  for (let k = 0; k <= 8; k++) {
    const y = 448.5 - k * 11;
    b += seg(660, y, 962, y) + text(650, y, k ? `Rp${k * 5},000,000` : 'Rp-', 'end');
  }
  const top = [422, 417, 418, 374, 448], lab = [414, 409, 409, 364, 439];
  const val = ['Rp11,571,000', 'Rp13,888,000', 'Rp13,385,000', 'Rp33,593,000', 'Rp-'], pct = ['21%', '26%', '25%', '62%', '0%'];
  b += seg(660.5, 448, 660.5, 490) + seg(608.5, 462.5, 962, 462.5) + seg(608.5, 476.5, 962, 476.5) + seg(608.5, 490.5, 962, 490.5) + seg(608.5, 462, 608.5, 490);
  val.forEach((v, k) => {
    const c = 691 + k * 60.3;
    if (k < 4) b += `<rect x="${c - 12.5}" y="${top[k]}" width="24" height="${448 - top[k]}" fill="url(#bl)" stroke="#5b93cf"/>`;
    b += seg(c + 30, 448, c + 30, 490) + text(c + 1, lab[k], v) + text(c, 455, k + 1) + text(c, 469, v) + text(c, 483, pct[k]);
  });
  b += line([[690, 448.5], [932, 448.5]], '#f4b183', 1.3);
  pct.forEach((p, k) => { b += text((k < 4 ? 707 : 704) + k * 60.3, 449, p); });
  const sw = (x, y) => `<rect x="${x}" y="${y - 2.5}" width="19" height="5" fill="url(#bl)" stroke="#5b93cf"/>`;
  b += sw(611, 469) + text(632, 469, 'Series1', 'start') + line([[611, 483], [631, 483]], '#f4b183') + text(632, 483, 'Series2', 'start');
  b += sw(723, 522) + text(744, 522, 'Series1', 'start') + line([[779, 522.5], [798, 522.5]], '#f4b183') + text(800, 522, 'Series2', 'start');
  b += text(811, 497, 'AXIS TITLE') + text(591, 404, 'AXIS TITLE', 'middle', 'transform="rotate(-90 591 404)"');
  chart(573, 324, 400, 214, b);
}

/* daily revenue */
{
  let b = title(773, 583, 'Harian', 'middle', 'style="font-size:13px;fill:#555"');
  const X = d => 640 + (d - 1) * 10.63, Y = v => 751.5 - v / 1000 * 16.6;
  for (let k = 0; k <= 9; k++) b += seg(634, Y(k * 1000), 965, Y(k * 1000)) + text(625, Y(k * 1000), k ? `Rp${k},000,000` : 'Rp-', 'end');
  for (let d = 1; d <= 32; d++) b += seg(X(d) - 5.3, 602, X(d) - 5.3, 754);
  for (let d = 1; d <= 31; d++) b += text(X(d), 763, d);
  const avg = [];
  for (let d = 2; d <= 28; d++) {
    const p = [omset[d - 2], omset[d - 1]].filter(v => v);
    avg.push([X(d), Y(p.reduce((s, v) => s + v, 0) / p.length)]);
  }
  b += line(avg, '#5b9bd5', 1.2, 'stroke-dasharray="1.5 1.5"');
  const pts = omset.map((v, k) => v ? [X(k + 1), Y(v)] : null);
  b += line(pts.slice(0, 20), '#5b9bd5', 2.4, 'stroke-linejoin="round"') + line(pts.slice(21), '#5b9bd5', 2.4, 'stroke-linejoin="round"');
  pts.forEach(p => { if (p) b += `<circle cx="${p[0]}" cy="${p[1]}" r="2.700" fill="#5b9bd5"/>`; });
  chart(572, 566, 404, 209, b);
}

/* product charts */
function product(o) {
  const X = d => o.x0 + (d - 1) * o.dx, Y = v => o.base - v * o.unit;
  let b = title(o.tx, o.ty, o.name, o.anchor || 'middle');
  b += `<rect x="${o.x0 - 5}" y="${Y(o.max)}" width="${o.dx * 31}" height="${o.max * o.unit}" fill="url(#pl)"/>` + seg(o.x0 - 5, o.base, o.x0 - 5 + o.dx * 31, o.base);
  for (let v = 0; v <= o.max; v += o.step) b += text(o.lx, Y(v), v, 'end');
  if (!o.noCat) for (let d = 1; d <= 31; d++) b += text(X(d), o.cy, d);
  (o.series || []).forEach(s => {
    const keys = Object.keys(s.data).map(Number);
    let run = [], labels = '';
    keys.forEach((d, k) => {
      const v = s.data[d];
      if (v) b += seg(X(d), Y(v), X(d), o.base, 'drop');
      run.push([X(d), Y(v)]);
      if (keys[k + 1] !== d + 1) { if (run.length > 1) b += line(run, s.color, 1.8); run = []; }
      labels += text(X(d), Y(v), v);
    });
    s.labels = labels;
  });
  b += (o.series || []).map(s => s.labels).join('') + (o.extra || '');
  chart(o.x, o.y, o.w, o.h, b);
}
const fill = d => { const r = {}; for (let k = 1; k <= 31; k++) r[k] = d[k] || 0; return r; };
const BLUE = '#5b9bd5';

product({ x: 1019, y: 323, w: 322, h: 129, name: 'AIR MINERAL', tx: 1180, ty: 340, x0: 1047.5, dx: 9.24, base: 428, unit: 2.75, max: 25, step: 5, lx: 1034, cy: 439,
  series: [{ color: BLUE, data: {1:8,3:3,4:1,5:3,6:4,7:1,8:7,9:6,10:3,11:5,12:4,13:2,14:5,15:9,16:9,17:5,18:5,19:1,20:3,22:6,23:13,24:7,25:11,26:17,27:21} }] });

const leg = (x, y, c, s, tx) => line([[x, y], [x + 20, y]], c) + text(tx, y, s, 'start');
product({ x: 1018, y: 464, w: 322, h: 145, name: 'ALAMI', tx: 1178, ty: 481, x0: 1041.3, dx: 9.4, base: 563, unit: 10.4, max: 6, step: 2, lx: 1029, noCat: true,
  series: [{ color: '#ffff00', data: fill({2:1,11:2,14:1,15:3}) }, { color: '#1ba1e2', data: fill({6:1,13:1,15:5}) }, { color: '#bf9000', data: fill({15:1,19:1,22:3,27:2}) }],
  extra: text(1088, 574, '1') + text(1154, 574, '1') + text(1173, 574, '5') + leg(1040, 593, '#ffff00', 'ALAMII AYAM JAMUR', 1061) + leg(1144, 593, '#1ba1e2', 'ALAMII CHEESE', 1165) + leg(1226, 593, '#bf9000', 'ALAMII CHOCOLATE', 1247) });

product({ x: 1019, y: 636, w: 322, h: 128, name: 'CHITATO', tx: 1180, ty: 653, x0: 1043, dx: 9.4, base: 741, unit: 11.6, max: 6, step: 2, lx: 1030, cy: 753,
  series: [{ color: BLUE, data: {1:2,4:1,5:1,6:1,9:2,14:1,15:3,16:2,17:1,18:2,19:1,20:1,22:3,23:1,24:4,25:2,26:1,27:5} }] });

product({ x: 1394, y: 324, w: 322, h: 128, name: 'FRENCH FRIES', tx: 1514, ty: 341, anchor: 'start', x0: 1421.7, dx: 9.26, base: 428.5, unit: 6.9, max: 10, step: 2, lx: 1409, cy: 440,
  series: [{ color: BLUE, data: {1:1,3:1,5:1,8:1,12:1,15:2,17:1} }] });

product({ x: 1394, y: 466, w: 322, h: 144, name: 'CIMORY', tx: 1531, ty: 482, anchor: 'start', x0: 1422, dx: 9.26, base: 533, unit: 3.2, max: 10, step: 5, lx: 1409, noCat: true,
  extra: line([[1495, 530.5], [1505, 523.5], [1514, 530.5]], '#c00000', 1.8) + line([[1542, 530], [1552, 530]], '#f49ae0', 1.8) + line([[1552, 530], [1561, 526.5]], '#c00000', 1.8) + line([[1579, 530], [1586, 530]], '#c00000', 1.8) +
    seg(1441, 528, 1441, 533) + seg(1478, 528, 1478, 533) + seg(1505, 524, 1505, 533) +
    text(1468, 544, '1') + text(1533, 544, '1') + text(1551, 544, '5') + leg(1463, 564, '#4a7ebb', 'CIMORY YOGURT BITES BLUEBERRY', 1485) + leg(1463, 580, '#c00000', 'CIMORY YOGURT BITES STRAWBERRY', 1485) + leg(1463, 596, '#f49ae0', 'CIMORY YOGURT BITES STRAWBERRY', 1485) });

product({ x: 1394, y: 636, w: 322, h: 128, name: 'CHOCO CRUNCH', tx: 1507, ty: 653, anchor: 'start', x0: 1417.5, dx: 9.4, base: 741, unit: 17.4, max: 4, step: 1, lx: 1405, cy: 753,
  series: [{ color: BLUE, data: {1:1,4:1,8:1,10:1,14:3,15:1,16:3} }] });

document.getElementById('charts').innerHTML = out;
```
